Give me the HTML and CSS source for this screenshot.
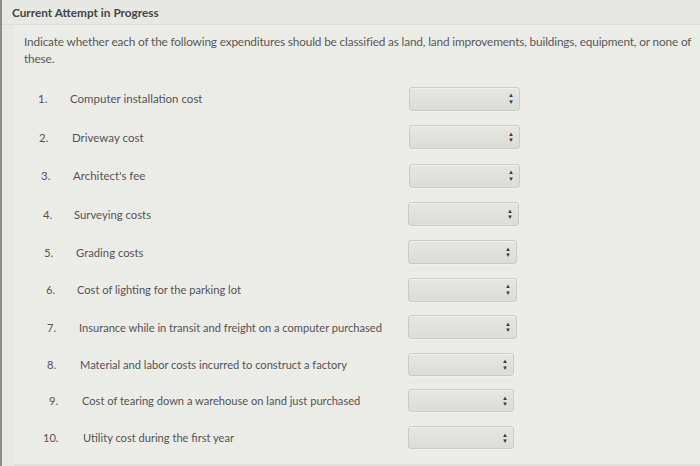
FILE: index.html
```html
<!DOCTYPE html>
<html>
<head>
<meta charset="utf-8">
<link rel="stylesheet" href="styles.css">
</head>
<body>
<div class="frame">
  <div class="header">Current Attempt in Progress</div>
  <div class="panel">
    <p class="intro">Indicate whether each of the following expenditures should be classified as land, land improvements, buildings, equipment, or none of these.</p>
    <ol class="items">
      <li class="item"><span class="num">1.</span><span class="label">Computer installation cost</span><span class="sel"><span class="arrows">&#9650;<br>&#9660;</span></span></li>
      <li class="item"><span class="num">2.</span><span class="label">Driveway cost</span><span class="sel"><span class="arrows">&#9650;<br>&#9660;</span></span></li>
      <li class="item"><span class="num">3.</span><span class="label">Architect's fee</span><span class="sel"><span class="arrows">&#9650;<br>&#9660;</span></span></li>
      <li class="item"><span class="num">4.</span><span class="label">Surveying costs</span><span class="sel"><span class="arrows">&#9650;<br>&#9660;</span></span></li>
      <li class="item"><span class="num">5.</span><span class="label">Grading costs</span><span class="sel"><span class="arrows">&#9650;<br>&#9660;</span></span></li>
      <li class="item"><span class="num">6.</span><span class="label">Cost of lighting for the parking lot</span><span class="sel"><span class="arrows">&#9650;<br>&#9660;</span></span></li>
      <li class="item"><span class="num">7.</span><span class="label">Insurance while in transit and freight on a computer purchased</span><span class="sel"><span class="arrows">&#9650;<br>&#9660;</span></span></li>
      <li class="item"><span class="num">8.</span><span class="label">Material and labor costs incurred to construct a factory</span><span class="sel"><span class="arrows">&#9650;<br>&#9660;</span></span></li>
      <li class="item"><span class="num">9.</span><span class="label">Cost of tearing down a warehouse on land just purchased</span><span class="sel"><span class="arrows">&#9650;<br>&#9660;</span></span></li>
      <li class="item"><span class="num">10.</span><span class="label">Utility cost during the first year</span><span class="sel"><span class="arrows">&#9650;<br>&#9660;</span></span></li>
    </ol>
  </div>
</div>
</body>
</html>
```

FILE: styles.css
```css
* { box-sizing: border-box; }
html, body { margin: 0; padding: 0; }
body {
  width: 700px;
  height: 466px;
  overflow: hidden;
  background: #e6e6e3;
  font-family: Lato, "Open Sans", sans-serif;
  color: #555;
}
.frame {
  height: 466px;
  border-left: 2px solid #8d8d8b;
  background: #e7e7e4;
  display: flex;
  flex-direction: column;
}
.header {
  height: 25px;
  padding: 5px 0 0 10px;
  font-size: 11.8px;
  font-weight: 700;
  color: #464646;
  border-bottom: 1px solid #dcdcd9;
}
.panel {
  flex: 1;
  margin-left: 12px;
  background: #ebebe8;
  padding: 8px 0 0 10px;
  border-bottom: 2px solid #dededb;
}
.intro {
  margin: 0;
  font-size: 11.8px;
  letter-spacing: -0.15px;
  line-height: 17px;
  color: #5a5a5a;
  padding-right: 0;
}
.items {
  list-style: none;
  margin: 12px 0 0 0;
  padding: 0;
}
.item {
  height: 38px;
  display: flex;
  align-items: center;
  font-size: 11.1px;
  color: #555;
}
.item:nth-child(-n+3) { font-size: 11.5px; }
.item:nth-child(4), .item:nth-child(5) { font-size: 11.3px; }
.item:nth-child(1), .item:nth-child(3) { height: 39px; }
.item:nth-child(6), .item:nth-child(9), .item:nth-child(10) { height: 37px; }
.item:nth-child(8) { height: 36px; }
.num {
  flex: 0 0 46px;
  padding-left: 14px;
}
.label {
  flex: 0 0 339px;
}
.sel {
  position: relative;
  width: 111px;
  height: 24px;
  border: 1px solid #cbcbc8;
  border-radius: 3px;
  background: linear-gradient(#e5e5e2, #dcdcd9);
  box-shadow: inset 0 1px 0 #efefed, 0 1px 0 #f0f0ee;
}
.arrows {
  position: absolute;
  right: 5px;
  top: 4.5px;
  font-size: 6px;
  line-height: 6.5px;
  color: #3a3a3a;
}
.item:nth-child(2) { padding-left: 2px; }
.item:nth-child(2) .num { padding-left: 13px; }
.item:nth-child(2) .label { flex-basis: 337px; }
.item:nth-child(3) { padding-left: 3px; }
.item:nth-child(3) .label { flex-basis: 336px; }
.item:nth-child(4) { padding-left: 4px; }
.item:nth-child(4) .num { padding-left: 15px; }
.item:nth-child(4) .label { flex-basis: 334px; }
.item:nth-child(5) { padding-left: 6px; }
.item:nth-child(5) .label { flex-basis: 332px; }
.item:nth-child(6) { padding-left: 7px; }
.item:nth-child(6) .num { padding-left: 15px; }
.item:nth-child(6) .label { flex-basis: 331px; }
.item:nth-child(7) { padding-left: 9px; }
.item:nth-child(7) .label { flex-basis: 329px; }
.item:nth-child(8) { padding-left: 10px; }
.item:nth-child(8) .num { padding-left: 13px; }
.item:nth-child(8) .label { flex-basis: 328px; }
.item:nth-child(9) { padding-left: 12px; }
.item:nth-child(9) .num { padding-left: 13px; }
.item:nth-child(9) .label { flex-basis: 326px; }
.item:nth-child(10) { padding-left: 13px; }
.item:nth-child(10) .num { padding-left: 6px; }
.item:nth-child(10) .label { flex-basis: 325px; }
.item:nth-child(n+5) .sel { width: 109px; }
.item:nth-child(n+8) .sel { width: 106px; height: 23px; }
```
